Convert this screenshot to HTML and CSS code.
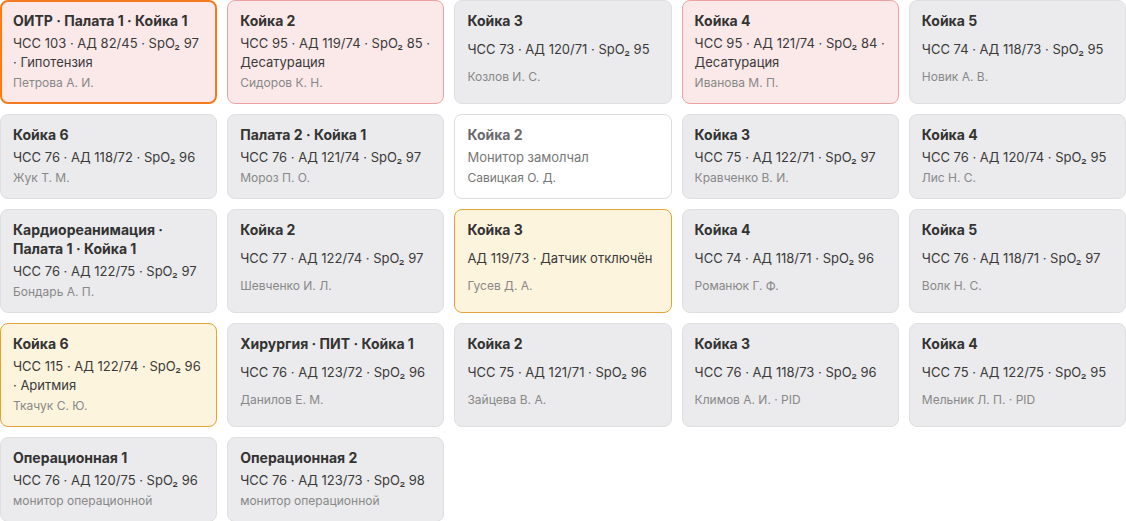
FILE: index.html
```html
<!DOCTYPE html>
<html lang="ru">
<head>
    <meta charset="UTF-8">
    <title>Мониторы пациентов</title>
    <link rel="stylesheet" href="styles.css">
</head>
<body>
    <div class="beds">
        <div class="bed alarm selected">
            <div class="bed-title">ОИТР · Палата 1 · Койка 1</div>
            <div class="bed-vitals">ЧСС 103 · АД 82/45 · SpO₂ 97 · Гипотензия</div>
            <div class="bed-name">Петрова А. И.</div>
        </div>
        <div class="bed alarm">
            <div class="bed-title">Койка 2</div>
            <div class="bed-vitals">ЧСС 95 · АД 119/74 · SpO₂ 85 · Десатурация</div>
            <div class="bed-name">Сидоров К. Н.</div>
        </div>
        <div class="bed">
            <div class="bed-title">Койка 3</div>
            <div class="bed-vitals">ЧСС 73 · АД 120/71 · SpO₂ 95</div>
            <div class="bed-name">Козлов И. С.</div>
        </div>
        <div class="bed alarm">
            <div class="bed-title">Койка 4</div>
            <div class="bed-vitals">ЧСС 95 · АД 121/74 · SpO₂ 84 · Десатурация</div>
            <div class="bed-name">Иванова М. П.</div>
        </div>
        <div class="bed">
            <div class="bed-title">Койка 5</div>
            <div class="bed-vitals">ЧСС 74 · АД 118/73 · SpO₂ 95</div>
            <div class="bed-name">Новик А. В.</div>
        </div>

        <div class="bed">
            <div class="bed-title">Койка 6</div>
            <div class="bed-vitals">ЧСС 76 · АД 118/72 · SpO₂ 96</div>
            <div class="bed-name">Жук Т. М.</div>
        </div>
        <div class="bed">
            <div class="bed-title">Палата 2 · Койка 1</div>
            <div class="bed-vitals">ЧСС 76 · АД 121/74 · SpO₂ 97</div>
            <div class="bed-name">Мороз П. О.</div>
        </div>
        <div class="bed offline">
            <div class="bed-title">Койка 2</div>
            <div class="bed-vitals">Монитор замолчал</div>
            <div class="bed-name">Савицкая О. Д.</div>
        </div>
        <div class="bed">
            <div class="bed-title">Койка 3</div>
            <div class="bed-vitals">ЧСС 75 · АД 122/71 · SpO₂ 97</div>
            <div class="bed-name">Кравченко В. И.</div>
        </div>
        <div class="bed">
            <div class="bed-title">Койка 4</div>
            <div class="bed-vitals">ЧСС 76 · АД 120/74 · SpO₂ 95</div>
            <div class="bed-name">Лис Н. С.</div>
        </div>

        <div class="bed">
            <div class="bed-title">Кардиореанимация · Палата 1 · Койка 1</div>
            <div class="bed-vitals">ЧСС 76 · АД 122/75 · SpO₂ 97</div>
            <div class="bed-name">Бондарь А. П.</div>
        </div>
        <div class="bed">
            <div class="bed-title">Койка 2</div>
            <div class="bed-vitals">ЧСС 77 · АД 122/74 · SpO₂ 97</div>
            <div class="bed-name">Шевченко И. Л.</div>
        </div>
        <div class="bed warning">
            <div class="bed-title">Койка 3</div>
            <div class="bed-vitals">АД 119/73 · Датчик отключён</div>
            <div class="bed-name">Гусев Д. А.</div>
        </div>
        <div class="bed">
            <div class="bed-title">Койка 4</div>
            <div class="bed-vitals">ЧСС 74 · АД 118/71 · SpO₂ 96</div>
            <div class="bed-name">Романюк Г. Ф.</div>
        </div>
        <div class="bed">
            <div class="bed-title">Койка 5</div>
            <div class="bed-vitals">ЧСС 76 · АД 118/71 · SpO₂ 97</div>
            <div class="bed-name">Волк Н. С.</div>
        </div>

        <div class="bed warning">
            <div class="bed-title">Койка 6</div>
            <div class="bed-vitals">ЧСС 115 · АД 122/74 · SpO₂ 96 · Аритмия</div>
            <div class="bed-name">Ткачук С. Ю.</div>
        </div>
        <div class="bed">
            <div class="bed-title">Хирургия · ПИТ · Койка 1</div>
            <div class="bed-vitals">ЧСС 76 · АД 123/72 · SpO₂ 96</div>
            <div class="bed-name">Данилов Е. М.</div>
        </div>
        <div class="bed">
            <div class="bed-title">Койка 2</div>
            <div class="bed-vitals">ЧСС 75 · АД 121/71 · SpO₂ 96</div>
            <div class="bed-name">Зайцева В. А.</div>
        </div>
        <div class="bed">
            <div class="bed-title">Койка 3</div>
            <div class="bed-vitals">ЧСС 76 · АД 118/73 · SpO₂ 96</div>
            <div class="bed-name">Климов А. И. · PID</div>
        </div>
        <div class="bed">
            <div class="bed-title">Койка 4</div>
            <div class="bed-vitals">ЧСС 75 · АД 122/75 · SpO₂ 95</div>
            <div class="bed-name">Мельник Л. П. · PID</div>
        </div>

        <div class="bed">
            <div class="bed-title">Операционная 1</div>
            <div class="bed-vitals">ЧСС 76 · АД 120/75 · SpO₂ 96</div>
            <div class="bed-name">монитор операционной</div>
        </div>
        <div class="bed">
            <div class="bed-title">Операционная 2</div>
            <div class="bed-vitals">ЧСС 76 · АД 123/73 · SpO₂ 98</div>
            <div class="bed-name">монитор операционной</div>
        </div>
    </div>
</body>
</html>
```

FILE: styles.css
```css
body {
    margin: 0;
    font-family: Inter, 'Noto Sans', sans-serif;
    background: #fff;
    color: #333;
}
.beds {
    display: grid;
    grid-template-columns: repeat(5, 1fr);
    gap: 10px;
}
.bed {
    display: flex;
    flex-direction: column;
    gap: 3px;
    padding: 10px 12px 12px;
    background: #ebebed;
    border: 1px solid #dfdfe2;
    border-radius: 8px;
}
.bed-title {
    margin-bottom: 1px;
    font-size: 14px;
    font-weight: 700;
    line-height: 19px;
    color: #333;
}
.bed-vitals {
    margin-top: auto;
    font-size: 13px;
    line-height: 19px;
    color: #3a3a3a;
}
.bed-name {
    margin-top: auto;
    margin-bottom: auto;
    font-size: 12px;
    line-height: 16px;
    color: #888;
}
.bed.alarm {
    background: #fbe9e9;
    border-color: #eda3a3;
}
.bed.selected {
    border: 2px solid #f47b20;
    padding: 9px 11px 11px;
}
.bed.warning {
    background: #fdf4dd;
    border-color: #dfa53a;
}
.bed.offline {
    background: #fff;
    border-color: #dcdcdf;
}
.bed.offline .bed-title {
    color: #6b6b6f;
}
.bed.offline .bed-vitals {
    color: #777;
}
.bed.offline .bed-name {
    color: #777;
}
```
